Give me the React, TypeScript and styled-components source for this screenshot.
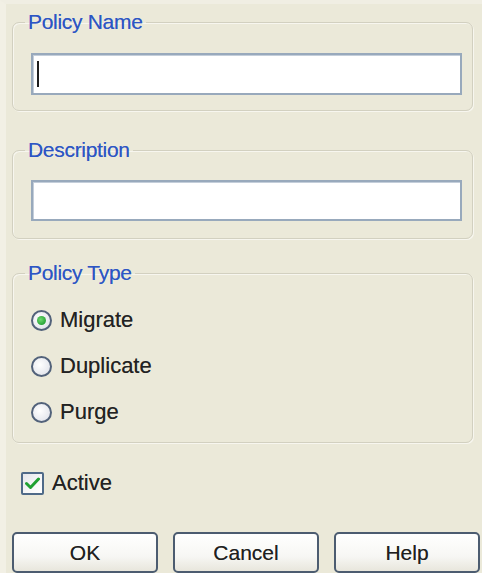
import React from 'react';
import styled, { createGlobalStyle } from 'styled-components';

const GlobalStyle = createGlobalStyle`
  html, body {
    margin: 0;
    padding: 0;
    background: #ebe9d9;
  }
  body {
    font-family: "Liberation Sans", Arial, sans-serif;
  }
`;

const DialogBlock = styled.div`
  box-sizing: border-box;
  width: 482px;
  height: 573px;
  overflow: hidden;
  background: #ebe9d9;
  border-left: 6px solid #f2f0e5;
  border-top: 4px solid #f0eee3;
  padding: 6px 9px 0 6px;
  display: flex;
  flex-direction: column;
`;

const GroupBox = styled.fieldset<{ $top: number; $padTop: number; $padBottom: number }>`
  box-sizing: border-box;
  margin: ${({ $top }) => $top}px 0 0 0;
  padding: ${({ $padTop }) => $padTop}px 10px ${({ $padBottom }) => $padBottom}px 18px;
  border: 1px solid #d2d0c0;
  border-radius: 7px;
  box-shadow: inset 1px 1px 0 #f7f6ef, 1px 1px 0 #f7f6ef;
  min-width: 0;
`;

const GroupLegend = styled.legend`
  margin-left: -6px;
  padding: 0 3px;
  font-size: 21px;
  line-height: 24px;
  color: #2c55c4;
  letter-spacing: -0.3px;
  text-shadow: 0 0 0.6px rgba(44, 85, 196, 0.6);
`;

const TextField = styled.div<{ $height: number }>`
  box-sizing: border-box;
  width: 431px;
  height: ${({ $height }) => $height}px;
  background: #ffffff;
  border: 2px solid #98a9bc;
  box-shadow: inset 1px 1px 0 #c4ceda;
  display: flex;
  align-items: center;
  padding-left: 4px;
`;

const Caret = styled.span`
  display: block;
  width: 2px;
  height: 26px;
  background: #1e1e1e;
`;

const OptionRow = styled.label<{ $height: number }>`
  display: flex;
  align-items: center;
  gap: 8px;
  height: ${({ $height }) => $height}px;
  font-size: 22px;
  color: #222222;
  text-shadow: 0 0 0.6px rgba(0, 0, 0, 0.5);
`;

const RadioCircle = styled.span<{ $checked?: boolean }>`
  box-sizing: border-box;
  width: 21px;
  height: 21px;
  border-radius: 50%;
  border: 2px solid #52627a;
  background: radial-gradient(circle at 40% 40%, #ffffff 0%, #e6e8ee 70%, #cfd4de 100%);
  display: flex;
  align-items: center;
  justify-content: center;
  &::after {
    content: '';
    display: ${({ $checked }) => ($checked ? 'block' : 'none')};
    width: 9px;
    height: 9px;
    border-radius: 50%;
    background: radial-gradient(circle at 40% 40%, #6fdb6f 0%, #2aa43a 70%);
  }
`;

const CheckRow = styled.label`
  display: flex;
  align-items: center;
  gap: 8px;
  margin: 27px 0 0 9px;
  height: 26px;
  font-size: 22px;
  color: #222222;
  text-shadow: 0 0 0.6px rgba(0, 0, 0, 0.5);
`;

const CheckBox = styled.span`
  box-sizing: border-box;
  width: 23px;
  height: 23px;
  border: 2px solid #4f6a88;
  border-radius: 2px;
  background: linear-gradient(135deg, #e4e6ea 0%, #f8f8f8 60%, #ffffff 100%);
  display: flex;
  align-items: center;
  justify-content: center;
`;

const ButtonBar = styled.div`
  display: flex;
  gap: 15px;
  margin: 36px -9px 0 0;
`;

const DialogButton = styled.button`
  box-sizing: border-box;
  flex-shrink: 0;
  width: 146px;
  height: 41px;
  border: 2px solid #4c5c70;
  border-radius: 5px;
  background: linear-gradient(180deg, #ffffff 0%, #f7f7f4 60%, #e8e6dc 100%);
  font-family: "Liberation Sans", Arial, sans-serif;
  font-size: 21px;
  color: #1f1f1f;
  text-shadow: 0 0 0.6px rgba(0, 0, 0, 0.5);
  padding: 0;
`;

const policyTypes = [
  { label: 'Migrate', checked: true },
  { label: 'Duplicate', checked: false },
  { label: 'Purge', checked: false },
];

const App = function App() {
  return (
    <>
      <GlobalStyle />
      <DialogBlock>
        <GroupBox $top={0} $padTop={19} $padBottom={15}>
          <GroupLegend>Policy Name</GroupLegend>
          <TextField $height={42}>
            <Caret />
          </TextField>
        </GroupBox>
        <GroupBox $top={27} $padTop={18} $padBottom={17}>
          <GroupLegend>Description</GroupLegend>
          <TextField $height={41} />
        </GroupBox>
        <GroupBox $top={22} $padTop={12} $padBottom={7}>
          <GroupLegend>Policy Type</GroupLegend>
          {policyTypes.map(item => (
            <OptionRow key={item.label} $height={46}>
              <RadioCircle $checked={item.checked} />
              {item.label}
            </OptionRow>
          ))}
        </GroupBox>
        <CheckRow>
          <CheckBox>
            <svg width="15" height="13" viewBox="0 0 15 13">
              <path
                d="M1.5 6.5 L5.5 10.5 L13.5 2"
                fill="none"
                stroke="#21a132"
                strokeWidth="3"
                strokeLinecap="round"
                strokeLinejoin="round"
              />
            </svg>
          </CheckBox>
          Active
        </CheckRow>
        <ButtonBar>
          <DialogButton>OK</DialogButton>
          <DialogButton>Cancel</DialogButton>
          <DialogButton>Help</DialogButton>
        </ButtonBar>
      </DialogBlock>
    </>
  );
};

export default App;
